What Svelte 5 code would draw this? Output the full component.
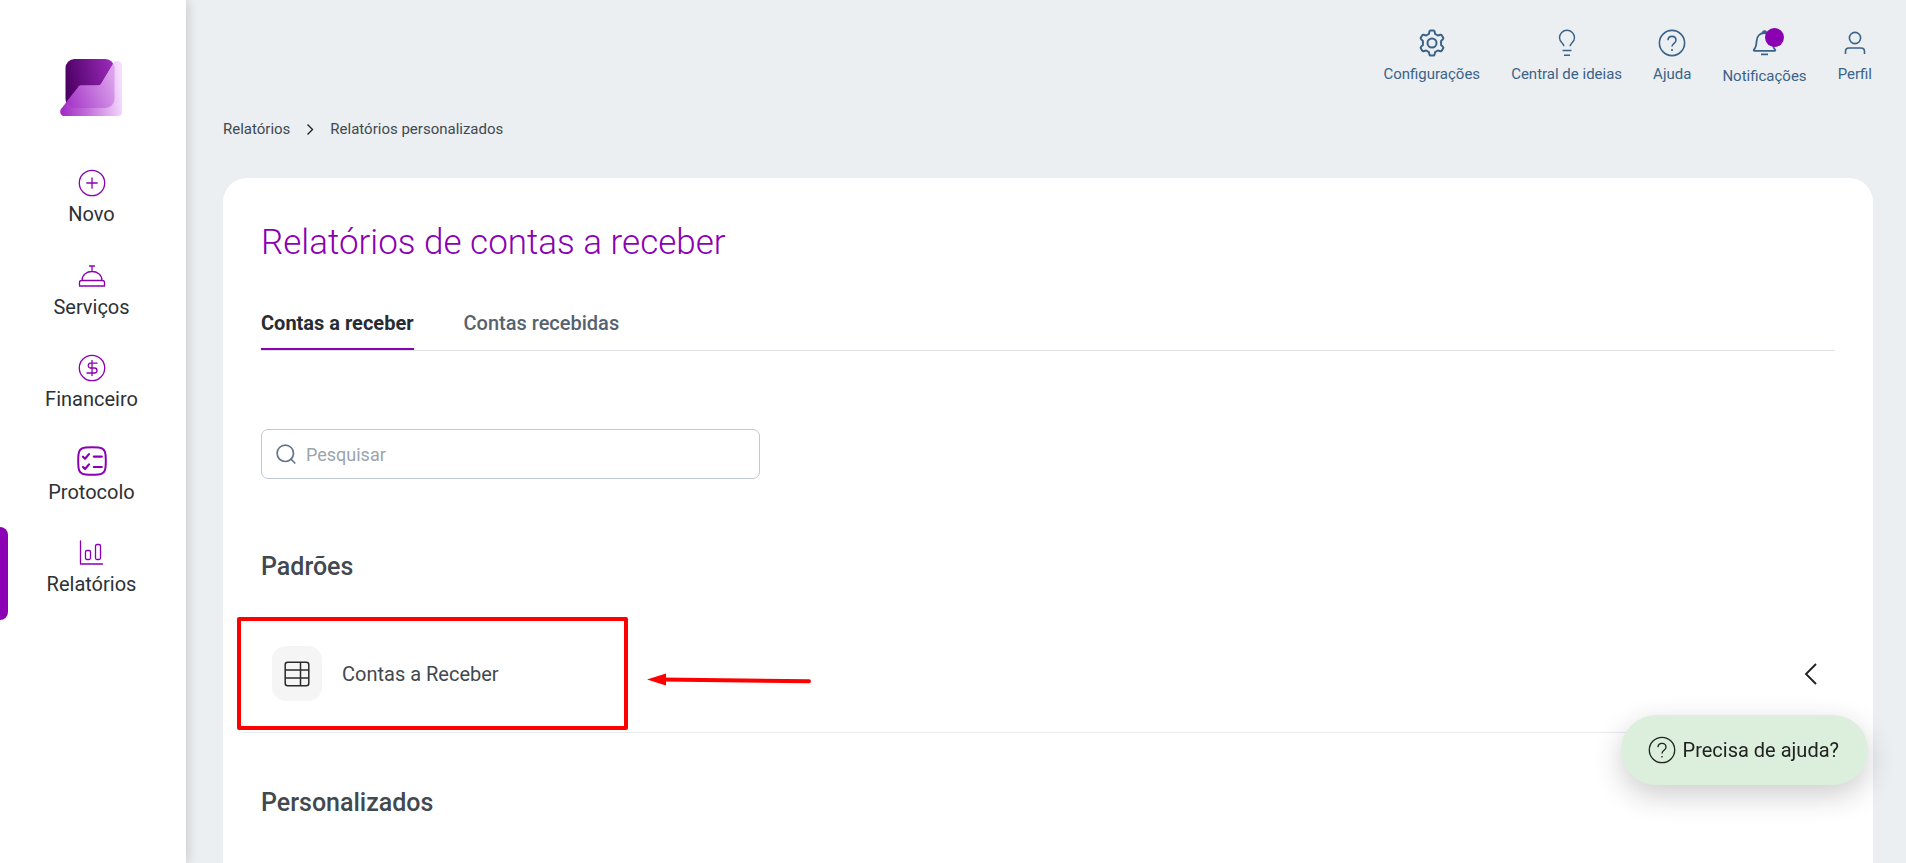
<script>
  const menu = [
    { id: 'novo', label: 'Novo' },
    { id: 'servicos', label: 'Serviços' },
    { id: 'financeiro', label: 'Financeiro' },
    { id: 'protocolo', label: 'Protocolo' },
    { id: 'relatorios', label: 'Relatórios' }
  ];
  const tools = [
    { id: 'config', label: 'Configurações' },
    { id: 'ideias', label: 'Central de ideias' },
    { id: 'ajuda', label: 'Ajuda' },
    { id: 'notificacoes', label: 'Notificações' },
    { id: 'perfil', label: 'Perfil' }
  ];
  const tabs = ['Contas a receber', 'Contas recebidas'];
  let current = $state('relatorios');
  let tab = $state(0);
  let search = $state('');
</script>

<div class="shell">
  <aside class="sidebar">
    <a class="logo" href="#inicio" aria-label="Início">
      <svg width="62" height="58" viewBox="0 0 62 58">
        <defs>
          <linearGradient id="dark" x1="0" y1="0.5" x2="1" y2="0.3">
            <stop offset="0" stop-color="#4b0062" />
            <stop offset="1" stop-color="#9c2abb" />
          </linearGradient>
          <linearGradient id="light" x1="0" y1="0.7" x2="1" y2="0.6">
            <stop offset="0" stop-color="#a32bc6" />
            <stop offset="0.45" stop-color="#c576dc" />
            <stop offset="1" stop-color="#f6dcff" />
          </linearGradient>
          <linearGradient id="overlap" x1="0" y1="0.8" x2="1" y2="0.4">
            <stop offset="0" stop-color="#a637c8" />
            <stop offset="1" stop-color="#dba3ec" />
          </linearGradient>
          <clipPath id="fold">
            <path d="M53 5C54 3 55 2 57 2c3 0 5 2 5 5v46c0 3-2 4-4 4H4c-3 0-5-4-3-7L18 28.500c1-2 2-2 4-2h16c2 0 3-1 4-3z" />
          </clipPath>
        </defs>
        <rect x="5.500" y="0" width="49" height="49" rx="9" fill="url(#dark)" />
        <path d="M53 5C54 3 55 2 57 2c3 0 5 2 5 5v46c0 3-2 4-4 4H4c-3 0-5-4-3-7L18 28.500c1-2 2-2 4-2h16c2 0 3-1 4-3z" fill="url(#light)" />
        <rect x="5.500" y="0" width="49" height="49" rx="9" fill="url(#overlap)" clip-path="url(#fold)" />
      </svg>
    </a>
    <nav class="menu" aria-label="Principal">
      {#each menu as item}
        <a
          class="menu-item"
          class:active={current === item.id}
          href={'#' + item.id}
          onclick={() => (current = item.id)}
        >
          <svg width="30" height="30" viewBox="0 0 30 30" fill="none" stroke="#8a00b2" stroke-width="1.3" stroke-linecap="round" stroke-linejoin="round">
            {#if item.id === 'novo'}
              <circle cx="15" cy="15" r="12.7" />
              <path d="M15 9.8v10.4M9.8 15h10.4" />
            {:else if item.id === 'servicos'}
              <path d="M12.5 5h5M15 5v5M5 19.500c0-12 20-12 20 0M4.5 19.500h21q2 0 2 2V25h-25v-3.500q0-2 2-2z" />
            {:else if item.id === 'financeiro'}
              <circle cx="15" cy="15" r="12.7" />
              <path d="M15 7.5v15M20 10.2h-7a2.5 2.5 0 0 0 0 4.8h4.5a2.5 2.5 0 0 1 0 5H10" />
            {:else if item.id === 'protocolo'}
              <path d="M8.500 1.500q6.500-.6 13 0 6.500.5 7 7 .6 6.500 0 13-.5 6.500-7 7-6.500.6-13 0-6.500-.5-7-7-.6-6.500 0-13 .5-6.500 7-7z" stroke-width="2" />
              <path d="M6 10.700l2 2 4-4.600M6 21l2 2 4-4.600M16.800 10.600h8M16.800 21h8" stroke-width="2.2" />
            {:else}
              <path d="M3.500 3v23h22M8.500 20v-6q0-1.500 1.500-1.500h2q1.500 0 1.500 1.500v6q0 1.500-1.500 1.500h-2q-1.500 0-1.500-1.500zM18.500 20V8q0-1.500 1.500-1.500h2q1.500 0 1.500 1.500v12q0 1.500-1.500 1.500h-2q-1.500 0-1.500-1.500z" />
            {/if}
          </svg>
          <span>{item.label}</span>
        </a>
      {/each}
    </nav>
  </aside>

  <div class="content">
    <header class="topbar">
      {#each tools as tool}
        <button class="tool" class:badged={tool.id === 'notificacoes'} type="button">
          <svg width="28" height="28" viewBox="0 0 28 28" fill="none" stroke="#3b6288" stroke-width="1.6" stroke-linejoin="round">
            {#if tool.id === 'config'}
              <circle cx="14" cy="14" r="4.500" stroke-width="2" />
              <path d="M12.500 1.500h3q.8 0 1 .8l.6 2.600 2.700 1.600 2.700-.8q.8-.2 1.200.5l1.500 2.600q.4.700-.2 1.300L23.100 12v4l1.900 1.900q.6.600.2 1.300l-1.500 2.600q-.4.700-1.200.5l-2.700-.8-2.700 1.600-.6 2.600q-.2.800-1 .8h-3q-.8 0-1-.8l-.6-2.600-2.700-1.600-2.700.8q-.8.200-1.200-.5l-1.500-2.600q-.4-.7.200-1.300L4.900 16v-4L3 10.100q-.6-.6-.2-1.300l1.500-2.600q.4-.7 1.200-.5l2.700.8 2.700-1.600.6-2.600q.2-.8 1-.8z" stroke-width="2" />
            {:else if tool.id === 'ideias'}
              <path d="M11 17.300C10.700 14.500 6.500 13 6.500 8.700a7.500 7.500 0 0 1 15 0c0 4.300-4.200 5.800-4.500 8.600M9.500 21.500h9M11 26.300h6" stroke-width="1.400" />
            {:else if tool.id === 'ajuda'}
              <circle cx="14" cy="14" r="12.600" />
              <path d="M10 11.300c0-5.300 8-5.300 8 0 0 3-4 3-4 6.200M14 20v2" />
            {:else if tool.id === 'notificacoes'}
              <path d="M3 20.500c2-2 2.300-3.500 2.600-8.500.3-5 3.500-8 7.900-8s7.600 3 7.900 8c.3 5 .6 6.500 2.600 8.500.6.700.3 1.300-.5 1.300h-20c-.8 0-1.100-.6-.5-1.300zM10 25.300h7M11.500 4.200a2 2 0 0 1 4 0" stroke-width="1.800" />
            {:else}
              <circle cx="14" cy="9" r="5.600" />
              <path d="M4.500 25v-2.500q0-3.500 3.500-3.500h12q3.500 0 3.500 3.500V25" />
            {/if}
          </svg>
          {#if tool.id === 'notificacoes'}<i class="dot"></i>{/if}
          <span>{tool.label}</span>
        </button>
      {/each}
    </header>

    <nav class="crumbs" aria-label="Trilha">
      <a href="#relatorios">Relatórios</a>
      <svg width="8" height="12" viewBox="0 0 8 12" fill="none" stroke="#222" stroke-width="1.400"><path d="M1.500 1.500l5 5-5 5" /></svg>
      <a href="#personalizados">Relatórios personalizados</a>
    </nav>

    <main class="card">
      <h1>Relatórios de contas a receber</h1>
      <div class="tabs" role="tablist">
        {#each tabs as name, i}
          <button type="button" role="tab" aria-selected={tab === i} class:selected={tab === i} onclick={() => (tab = i)}>{name}</button>
        {/each}
      </div>

      <label class="search">
        <svg width="20" height="20" viewBox="0 0 20 20" fill="none" stroke="#66768a" stroke-width="1.700" stroke-linecap="round"><circle cx="9.300" cy="9.300" r="8.200" /><path d="M14.800 15l4 4" /></svg>
        <input type="text" placeholder="Pesquisar" aria-label="Pesquisar" bind:value={search} />
      </label>

      <h2>Padrões</h2>
      <button class="report" type="button">
        <span class="tile">
          <svg width="26" height="26" viewBox="0 0 26 26" fill="none" stroke="#2b2b2b" stroke-width="1.500"><rect x="1.200" y="1.200" width="23.600" height="23.600" rx="2.500" /><path d="M1.200 9h23.600M1.200 17h23.600M16.500 1.200v23.600" /></svg>
        </span>
        <span class="report-name">Contas a Receber</span>
        <svg width="14" height="22" viewBox="0 0 14 22" fill="none" stroke="#1f2326" stroke-width="1.900"><path d="M12 1L2 11l10 10" /></svg>
        <span class="mark">
          <svg width="168" height="16" viewBox="0 0 168 16"><path d="M14 7.500l148 1.700" stroke="#f00" stroke-width="4" stroke-linecap="round" /><path d="M0 7.500L19 1.500v12z" fill="#f00" /></svg>
        </span>
      </button>

      <h2>Personalizados</h2>
    </main>
  </div>

  <button class="help" type="button">
    <svg width="28" height="28" viewBox="0 0 28 28" fill="none" stroke="#222" stroke-width="1.300"><circle cx="14" cy="14" r="12.700" /><path d="M10 11.300c0-5.300 8-5.300 8 0 0 3-4 3-4 6.200M14 20v1.500" /></svg>
    <span>Precisa de ajuda?</span>
  </button>
</div>

<style>
  :global(body) {
    margin: 0;
    overflow: hidden;
    background: #ebeff2;
  }
  .shell {
    display: flex;
    height: 100vh;
    font-family: Roboto, 'Liberation Sans', sans-serif;
    color: #41494f;
  }
  button {
    font: inherit;
    color: inherit;
    background: none;
    border: 0;
    padding: 0;
    cursor: pointer;
  }
  a {
    color: inherit;
    text-decoration: none;
  }
  svg {
    display: block;
    flex: none;
  }
  .sidebar {
    flex: none;
    width: 186px;
    background: #fff;
    box-shadow: 0 0 12px rgba(0, 0, 0, 0.2);
  }
  .logo {
    display: flex;
    justify-content: center;
    padding: 59px 4px 40px 0;
  }
  .menu {
    display: grid;
    grid-auto-rows: 1fr;
    min-height: 463px;
  }
  .menu-item {
    display: flex;
    flex-direction: column;
    align-items: center;
    gap: 4px;
    padding: 11px 11px 0 0;
    border-left: 8px solid transparent;
    font-size: 20px;
    line-height: 24px;
    color: #2c3136;
  }
  .active {
    position: relative;
  }
  .active::before {
    content: '';
    position: absolute;
    top: 0;
    bottom: 0;
    left: -8px;
    width: 8px;
    border-radius: 0 8px 8px 0;
    background: #8a00b2;
  }
  .content {
    flex: 1;
    min-width: 0;
    display: flex;
    flex-direction: column;
    padding: 0 33px 0 37px;
  }
  .topbar {
    display: flex;
    justify-content: flex-end;
    align-items: flex-start;
    gap: 31px;
    height: 57px;
    padding: 29px 1px 0 0;
    font-size: 15px;
    line-height: 20px;
    color: #3b6288;
  }
  .tool {
    position: relative;
    display: flex;
    flex-direction: column;
    align-items: center;
    gap: 7px;
  }
  .badged {
    gap: 9px;
  }
  .dot {
    position: absolute;
    top: -1px;
    left: 43px;
    width: 19px;
    height: 19px;
    border-radius: 50%;
    background: #8a00b2;
  }
  .crumbs {
    display: flex;
    align-items: center;
    gap: 16px;
    margin-top: 33px;
    font-size: 15px;
    line-height: 20px;
  }
  .card {
    flex: 1;
    margin-top: 39px;
    padding: 40px 38px 0;
    background: #fff;
    border-radius: 24px 24px 0 0;
  }
  h1 {
    margin: 0;
    font-size: 35px;
    line-height: 50px;
    font-weight: 300;
    color: #8a00b2;
  }
  .tabs {
    display: flex;
    gap: 50px;
    margin-top: 35px;
    border-bottom: 1px solid #dfe1e4;
    font-size: 20px;
    line-height: 40px;
    font-weight: 500;
    color: #566270;
  }
  .tabs button {
    padding-bottom: 5px;
    border-bottom: 2px solid transparent;
  }
  .tabs .selected {
    color: #272c33;
    font-weight: 700;
    border-color: #8a00b2;
  }
  .search {
    display: flex;
    align-items: center;
    gap: 10px;
    box-sizing: border-box;
    max-width: 499px;
    height: 50px;
    margin-top: 78px;
    padding: 0 14px;
    border: 1px solid #bfc9d2;
    border-radius: 7px;
  }
  input {
    flex: 1;
    min-width: 0;
    border: 0;
    outline: 0;
    padding: 2px 0 0;
    background: none;
    font: 18px/24px Roboto, 'Liberation Sans', sans-serif;
    color: #41494f;
  }
  input::placeholder {
    color: #9aa5ac;
  }
  h2 {
    margin: 72px 0 0;
    font-size: 25px;
    line-height: 32px;
    font-weight: 500;
  }
  .report {
    position: relative;
    display: flex;
    align-items: center;
    gap: 20px;
    width: calc(100% + 38px);
    margin: 32px -19px -18px;
    padding: 31px 36px 31px 30px;
    border-bottom: 1px solid #e8ecef;
    font-size: 20px;
    line-height: 24px;
    text-align: left;
  }
  .tile {
    display: grid;
    place-items: center;
    width: 50px;
    height: 55px;
    border-radius: 14px;
    background: #f5f5f5;
  }
  .report-name {
    flex: 1;
  }
  .mark {
    position: absolute;
    left: -5px;
    top: 2px;
    box-sizing: border-box;
    width: 391px;
    height: 113px;
    border: 4px solid #f00;
    border-radius: 2px;
  }
  .mark svg {
    position: absolute;
    left: 406px;
    top: 51px;
  }
  .help {
    position: fixed;
    right: 38px;
    bottom: 78px;
    display: flex;
    align-items: center;
    gap: 7px;
    padding: 21px 29px 21px 27px;
    border-radius: 35px;
    background: #dbefdc;
    box-shadow: 0 10px 30px rgba(0, 0, 0, 0.2);
    font-size: 20px;
    line-height: 28px;
    color: #222;
  }
</style>
